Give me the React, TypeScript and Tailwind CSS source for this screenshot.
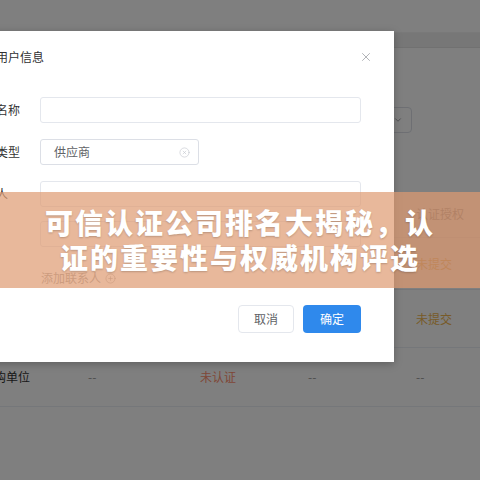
import React from "react"
import { ChevronDown, CircleX, CirclePlus, X } from "lucide-react"

const font = { fontFamily: '"Noto Sans CJK SC", "Noto Sans", sans-serif' }

// underlying table rows; only the parts not covered by the dialog are filled
const rows = [
  { h: "h-[52px]", name: "", a: "", b: "", c: "", d: "未提交", tone: "submit" },
  { h: "h-[58px]", name: "", a: "", b: "", c: "", d: "未提交", tone: "submit" },
  { h: "h-[59px]", name: "采购单位", a: "--", b: "未认证", c: "--", d: "--", tone: "none" },
]

const Field = ({ label, children }: { label: string; children: React.ReactNode }) => (
  <div className="flex items-center">
    <span className="w-[68px] shrink-0 text-[12px] text-[#333]">{label}</span>
    {children}
  </div>
)

export default function App() {
  return (
    <div className="relative w-[480px] h-[480px] overflow-hidden bg-white" style={font}>
      {/* page under the mask */}
      <div className="flex flex-col">
        <div className="h-[33px] border-b border-[#f2f2f2]" />
        <div className="h-[15px] bg-[#eeeeee] border-b border-[#e3e3e3]" />
        <div className="h-[59px]" />
        <div className="flex justify-end pr-[68px]">
          <div className="w-[110px] h-[26px] rounded-[4px] border border-[#dcdfe6] flex items-center justify-end pr-[8px]">
            <ChevronDown size={10} className="text-[#909399]" />
          </div>
        </div>
        <div className="h-[57px]" />
        <div className="grid grid-cols-[88px_112px_108px_108px_1fr] h-[48px] items-center border-b border-[#ebeef5] text-[12px] text-[#909399]">
          <span />
          <span />
          <span />
          <span />
          <span>认证授权</span>
        </div>
        {rows.map((r, i) => (
          <div
            key={i}
            className={`grid grid-cols-[88px_112px_108px_108px_1fr] ${r.h} items-center border-b border-[#ebeef5] text-[12px]`}
          >
            <span className="ml-[-18px] text-[#333]">{r.name}</span>
            <span className="text-[#999]">{r.a}</span>
            <span className="text-[#ff9070]">{r.b}</span>
            <span className="text-[#999]">{r.c}</span>
            <span className={r.tone === "submit" ? "text-[#f0b650]" : "text-[#999]"}>{r.d}</span>
          </div>
        ))}
      </div>

      {/* mask */}
      <div className="absolute inset-0 bg-black/50" />

      {/* dialog */}
      <div className="absolute inset-0 pt-[31px]">
        <div className="ml-[-40px] w-[434px] h-[331px] bg-white shadow-[0_2px_8px_rgba(0,0,0,0.25)] flex flex-col pl-[12px] pr-[33px]">
          <div className="h-[52px] flex items-center justify-between">
            <span className="text-[12px] text-[#303133]">编辑用户信息</span>
            <X size={14} strokeWidth={1.2} className="text-[#909399] mr-[-12px]" />
          </div>
          <div className="flex flex-col pt-[14px]">
            <Field label="单位名称">
              <div className="flex-1 h-[26px] rounded-[3px] border border-[#e4e7ed]" />
            </Field>
            <div className="h-[16px]" />
            <Field label="单位类型">
              <div className="w-[159px] h-[26px] rounded-[3px] border border-[#dcdfe6] flex items-center justify-between pl-[13px] pr-[8px]">
                <span className="text-[12px] text-[#606266]">供应商</span>
                <CircleX size={11} strokeWidth={1.3} className="text-[#c0c4cc]" />
              </div>
            </Field>
            <div className="h-[16px]" />
            <Field label="联系人">
              <div className="flex-1 h-[26px] rounded-[3px] border border-[#e4e7ed]" />
            </Field>
            <div className="h-[14px]" />
            <Field label="">
              <div className="flex-1 h-[26px] rounded-[3px] border border-[#e4e7ed]" />
            </Field>
            <div className="pl-[69px] pt-[22px] h-[40px] flex items-center gap-[4px] text-[12px] text-[#a0a0a0]">
              <span>添加联系人</span>
              <CirclePlus size={11} strokeWidth={1.3} />
            </div>
          </div>
          <div className="flex justify-end gap-[9px] pt-[18px]">
            <button className="w-[56px] h-[28px] rounded-[4px] border border-[#e4e7ed] text-[12px] text-[#606266] bg-white">
              取消
            </button>
            <button className="w-[58px] h-[28px] rounded-[4px] text-[12px] text-white bg-[#2f89ec]">
              确定
            </button>
          </div>
        </div>
      </div>

      {/* banner */}
      <div className="absolute left-0 right-0 top-[192px] h-[96px] bg-[rgba(222,154,113,0.7)] flex flex-col items-center justify-center">
        <p className="text-white text-[28px] leading-[35px] font-black tracking-[2px] text-center [text-shadow:0_1px_2px_rgba(0,0,0,0.2)]">
          可信认证公司排名大揭秘，认
        </p>
        <p className="text-white text-[28px] leading-[35px] font-black tracking-[2px] text-center [text-shadow:0_1px_2px_rgba(0,0,0,0.2)]">
          证的重要性与权威机构评选
        </p>
      </div>
    </div>
  )
}
